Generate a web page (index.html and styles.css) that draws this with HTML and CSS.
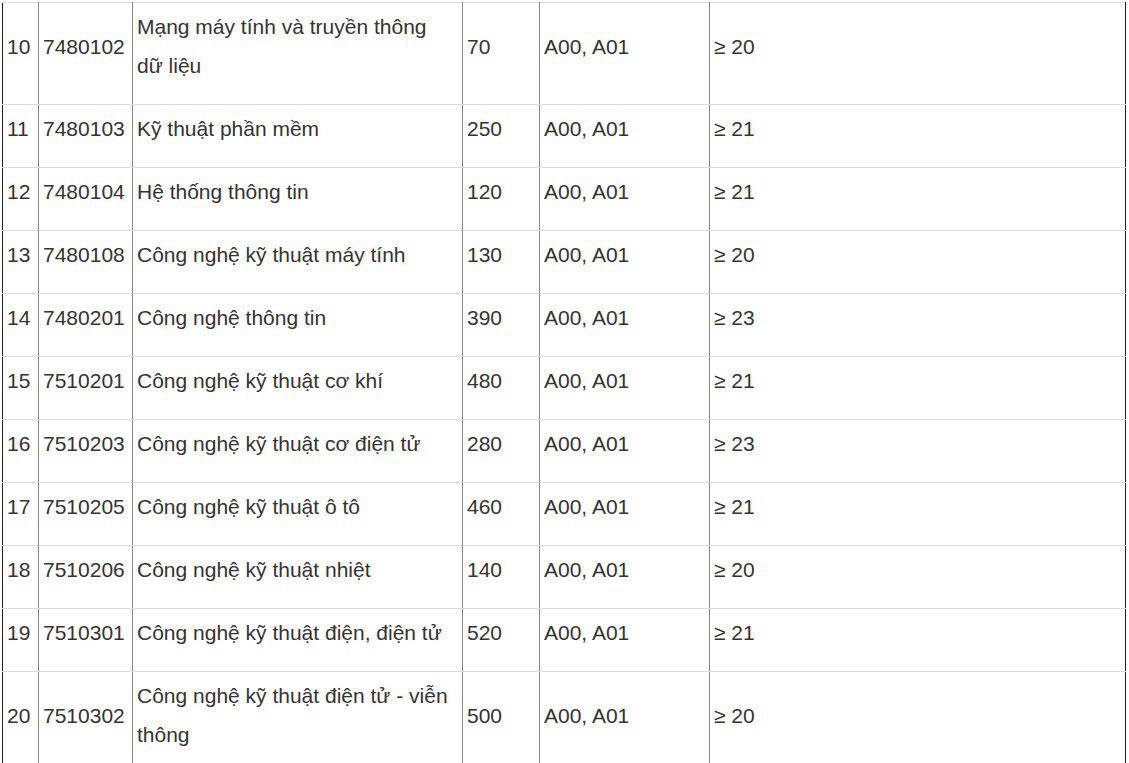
FILE: index.html
```html
<!DOCTYPE html>
<html lang="vi">
<head>
<meta charset="utf-8">
<title>Chỉ tiêu tuyển sinh</title>
<link rel="stylesheet" href="styles.css">
</head>
<body>
<table class="majors">
  <colgroup>
    <col class="c-no"><col class="c-code"><col class="c-name"><col class="c-quota"><col class="c-group"><col class="c-score">
  </colgroup>
  <tbody>
    <tr><td>10</td><td>7480102</td><td>Mạng máy tính và truyền thông dữ liệu</td><td>70</td><td>A00, A01</td><td>≥ 20</td></tr>
    <tr><td>11</td><td>7480103</td><td>Kỹ thuật phần mềm</td><td>250</td><td>A00, A01</td><td>≥ 21</td></tr>
    <tr><td>12</td><td>7480104</td><td>Hệ thống thông tin</td><td>120</td><td>A00, A01</td><td>≥ 21</td></tr>
    <tr><td>13</td><td>7480108</td><td>Công nghệ kỹ thuật máy tính</td><td>130</td><td>A00, A01</td><td>≥ 20</td></tr>
    <tr><td>14</td><td>7480201</td><td>Công nghệ thông tin</td><td>390</td><td>A00, A01</td><td>≥ 23</td></tr>
    <tr><td>15</td><td>7510201</td><td>Công nghệ kỹ thuật cơ khí</td><td>480</td><td>A00, A01</td><td>≥ 21</td></tr>
    <tr><td>16</td><td>7510203</td><td>Công nghệ kỹ thuật cơ điện tử</td><td>280</td><td>A00, A01</td><td>≥ 23</td></tr>
    <tr><td>17</td><td>7510205</td><td>Công nghệ kỹ thuật ô tô</td><td>460</td><td>A00, A01</td><td>≥ 21</td></tr>
    <tr><td>18</td><td>7510206</td><td>Công nghệ kỹ thuật nhiệt</td><td>140</td><td>A00, A01</td><td>≥ 20</td></tr>
    <tr><td>19</td><td>7510301</td><td>Công nghệ kỹ thuật điện, điện tử</td><td>520</td><td>A00, A01</td><td>≥ 21</td></tr>
    <tr><td>20</td><td>7510302</td><td>Công nghệ kỹ thuật điện tử - viễn thông</td><td>500</td><td>A00, A01</td><td>≥ 20</td></tr>
  </tbody>
</table>
</body>
</html>
```
FILE: styles.css
```css
html, body {
  margin: 0;
  background: #fff;
}
body {
  padding: 2px 0 0 2px;
  font-family: "Liberation Sans", Arial, sans-serif;
  font-size: 21px;
  color: #333;
}
.majors {
  border-collapse: collapse;
  table-layout: fixed;
  width: 1124px;
}
.c-no { width: 36px; }
.c-code { width: 94px; }
.c-name { width: 330px; }
.c-quota { width: 77px; }
.c-group { width: 170px; }
.c-score { width: 416px; }
.majors td {
  padding: 4px 5px 19px 4px;
  line-height: 39px;
  vertical-align: middle;
  text-align: left;
  border-top: 1px solid #ddd;
  border-bottom: 1px solid #ddd;
  border-left: 1px solid #888;
  border-right: 1px solid #888;
  white-space: normal;
}
.majors td:first-child {
  border-left: 1px solid #222;
}
.majors td:last-child {
  border-right: 1px solid #222;
}
```
